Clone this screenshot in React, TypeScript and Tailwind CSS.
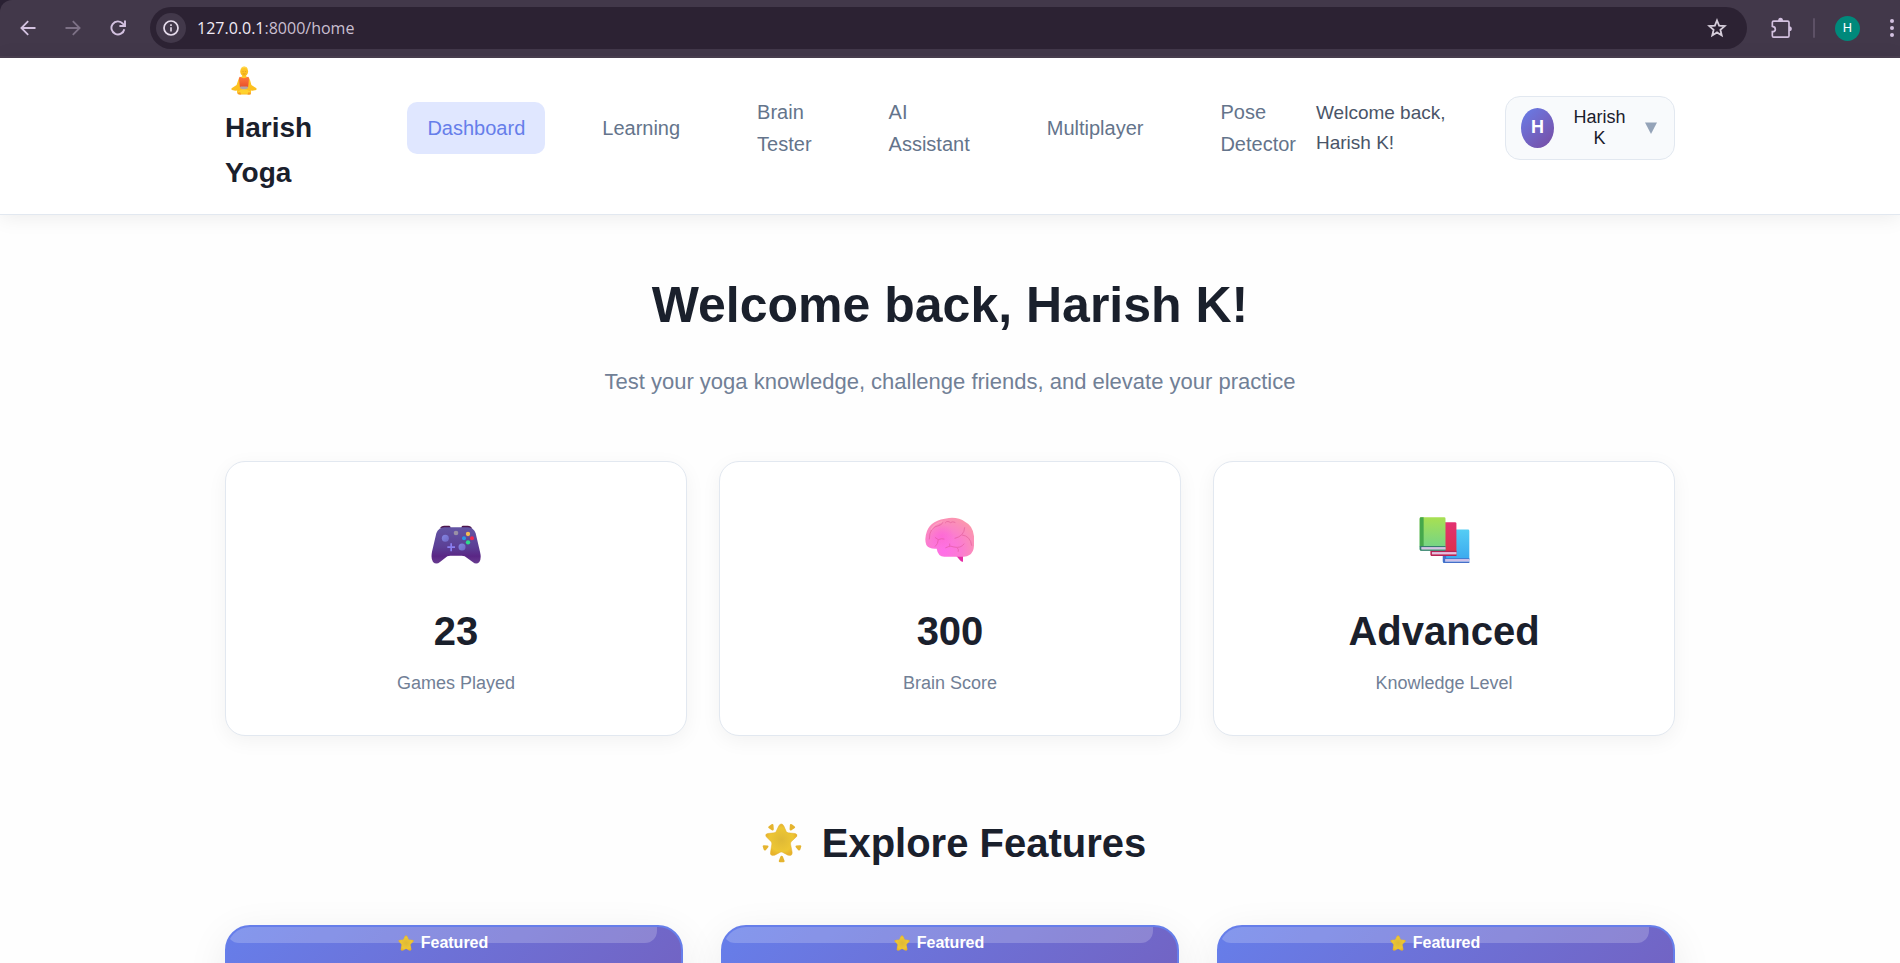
import type { ReactNode } from "react";

function ArrowIcon({ flipped = false }: { flipped?: boolean }) {
  return (
    <svg viewBox="0 0 16 16" className={flipped ? "size-4 -scale-x-100" : "size-4"} fill="none" stroke="currentColor" strokeWidth="1.8">
      <path d="M15.5 8H1.500M8.200 1.200 1.400 8l6.800 6.800" />
    </svg>
  );
}

function ReloadIcon() {
  return (
    <svg viewBox="0 0 16 16" className="size-4" fill="none" stroke="currentColor" strokeWidth="1.9">
      <path d="M14.300 9.200A6.500 6.500 0 1 1 12.800 3.600L14.600 5.400" />
      <path d="M15 .6v5.400H9.400" />
    </svg>
  );
}

function InfoIcon() {
  return (
    <svg viewBox="0 0 16 16" className="size-4" fill="none" stroke="currentColor">
      <circle cx="8" cy="8" r="7" strokeWidth="1.700" />
      <path d="M8 7.200v4.300M8 4.300v1.700" strokeWidth="1.600" />
    </svg>
  );
}

function StarOutlineIcon() {
  return (
    <svg viewBox="0 0 20 20" className="size-5" fill="none" stroke="currentColor" strokeWidth="1.8">
      <path d="m10 2.500 2.100 5.200 5.600.4-4.300 3.700 1.300 5.600L10 14.400l-4.700 3 1.300-5.600-4.300-3.700 5.600-.4Z" />
    </svg>
  );
}

function ExtensionIcon() {
  return (
    <svg viewBox="273 50 66 66" className="size-[22px]">
      <path
        d="M281 62.500H323Q327 62.500 327 66.500V106Q327 110.500 323 110.500H281Q277 110.500 277 106V94Q286 94 286 86.500T277 78V66.500Q277 62.500 281 62.500Z"
        fill="none"
        stroke="currentColor"
        strokeWidth="5"
      />
      <path d="M294 62a7.500 9.500 0 0 1 15 0ZM327 78a8.500 7.500 0 0 1 0 15Z" fill="currentColor" />
    </svg>
  );
}

function YogaEmoji() {
  return (
    <svg viewBox="34 36 79 90" className="h-[30px] w-[26px]" role="img" aria-label="Person in lotus position">
      <defs>
        <linearGradient id="skin" x1="0" y1="0" x2="0" y2="1">
          <stop offset="0" stopColor="#ffc928" />
          <stop offset="1" stopColor="#fbbc1c" />
        </linearGradient>
        <linearGradient id="shirt" x1="0" y1="0" x2="0" y2="1">
          <stop offset="0" stopColor="#ff7a3c" />
          <stop offset="1" stopColor="#e9502b" />
        </linearGradient>
      </defs>
      <path d="M68 59h12v8q10 2 12 12l4 14 14 9q4 3 0 6l-11 3-5-1q4 9-6 12H59q-9-3-6-12l-6 1-10-3q-4-3 0-6l14-9 5-15q2-9 12-11Z" fill="url(#skin)" />
      <path d="M52 114 73 104l22 10-3 6H56Z" fill="#ffd22e" />
      <path d="M55 121l-1-4 8-2 3 7ZM84 122l3-7 8 2-2 6Z" fill="#f79a24" />
      <path d="M61 68q12 9 25 0l3 4-3 27H61l-3-27Z" fill="url(#shirt)" />
      <path d="M63 98h21l2 4-7 4H68l-7-4Z" fill="#b3a3a6" />
      <ellipse cx="74" cy="52" rx="12" ry="14" fill="url(#skin)" />
      <path d="M64 44q2-7 10-7t11 7q-10-5-21 0Z" fill="#ffd64a" />
      <path d="M69 52h3M77 52h3M70 59q4 2 8 0" stroke="#cf8c2a" strokeWidth="2" fill="none" />
    </svg>
  );
}

function GamepadEmoji() {
  return (
    <svg viewBox="95 106 150 117" className="h-[39px] w-[50px]" role="img" aria-label="Game controller">
      <defs>
        <linearGradient id="pad" x1="0" y1="0" x2="0" y2="1">
          <stop offset="0" stopColor="#6355a4" />
          <stop offset=".55" stopColor="#5b3f95" />
          <stop offset=".8" stopColor="#5a2685" />
          <stop offset="1" stopColor="#683c90" />
        </linearGradient>
        <linearGradient id="stick" x1="0" y1="0" x2="1" y2="1">
          <stop offset="0" stopColor="#8486e2" />
          <stop offset="1" stopColor="#7068c6" />
        </linearGradient>
      </defs>
      <path d="M121 117q4-9 14-9h15q4 1 4 8H121ZM186 116q0-7 4-8h15q10 0 14 9Z" fill="#4c154d" />
      <path d="M135 113H206Q223 114 229 131L242 186Q247 207 240 217 231 226 220 217L196 200Q192 198 187 198H153Q148 198 144 200L122 217Q111 226 101 217 94 207 98 186L111 131Q117 114 135 113Z" fill="url(#pad)" />
      <circle cx="138" cy="146" r="10.500" fill="url(#stick)" />
      <circle cx="188" cy="172" r="10.500" fill="url(#stick)" />
      <path d="M153 161h5v9h9v5h-9v10h-5v-10h-9v-5h9Z" fill="#8a7ff0" />
      <circle cx="170" cy="130" r="7" fill="#9990a5" />
      <circle cx="206" cy="133" r="6.500" fill="#f5bd52" />
      <circle cx="194" cy="146" r="6" fill="#279ae8" />
      <circle cx="218" cy="146" r="6" fill="#f32850" />
      <circle cx="206" cy="158" r="6.500" fill="#2fdc8c" />
    </svg>
  );
}

function BrainEmoji() {
  return (
    <svg viewBox="78 82 150 135" className="h-[45px] w-[50px]" role="img" aria-label="Brain">
      <defs>
        <radialGradient id="brain" gradientUnits="userSpaceOnUse" cx="135" cy="185" r="115">
          <stop offset="0" stopColor="#ff6fe8" />
          <stop offset=".45" stopColor="#fb7bd2" />
          <stop offset="1" stopColor="#fb9aa9" />
        </radialGradient>
        <radialGradient id="glow" gradientUnits="userSpaceOnUse" cx="128" cy="140" r="36">
          <stop offset="0" stopColor="#ff5fd6" stopOpacity=".6" />
          <stop offset="1" stopColor="#ff5fd6" stopOpacity="0" />
        </radialGradient>
      </defs>
      <path d="M172 199h20v17q-6 1-9-4Z" fill="#e62da6" />
      <path d="M150 85Q178 82 199 97 222 108 225 140V168Q224 188 211 196 205 201 194 201H136Q117 201 113 177 91 179 82 166 75 148 84 124 96 91 150 85Z" fill="url(#brain)" />
      <circle cx="128" cy="140" r="36" fill="url(#glow)" />
      <g fill="none" stroke="#dc5290" strokeWidth="3" strokeLinecap="round" opacity=".5">
        <path d="M91 148Q90 112 121 107M121 107q8-1 10-8M139 99q3-6 11-3l4 3q7-5 14-1" />
        <path d="M168 146q28-7 29-32M190 136q24 3 28 31M109 144l9 6q10-5 17-2M118 150q-1 14-9 20" />
        <path d="M140 174q14-9 25-2 20 5 30-9M176 176q4 3 2 9M152 171v-8" />
      </g>
      <path d="M96 120q10-19 34-24" fill="none" stroke="#ffbcc7" strokeWidth="4" opacity=".45" />
    </svg>
  );
}

function BooksEmoji() {
  return (
    <svg viewBox="89 83 152 139" className="h-[46px] w-[51px]" role="img" aria-label="Books">
      <defs>
        <linearGradient id="green" x1="0" y1="0" x2="0" y2="1">
          <stop offset="0" stopColor="#a8e052" />
          <stop offset="1" stopColor="#6fd38c" />
        </linearGradient>
        <linearGradient id="red" x1="0" y1="0" x2="0" y2="1">
          <stop offset="0" stopColor="#e33172" />
          <stop offset="1" stopColor="#dd3145" />
        </linearGradient>
        <linearGradient id="blue" x1="0" y1="0" x2="0" y2="1">
          <stop offset="0" stopColor="#54cdf4" />
          <stop offset="1" stopColor="#39a5ee" />
        </linearGradient>
      </defs>
      <rect x="160" y="121" width="80" height="101" rx="4" fill="url(#blue)" />
      <path d="M160 201h10v7h70v4h-73v6h73v4h-76q-4 0-4-5Z" fill="#456fc9" />
      <rect x="167" y="210" width="73" height="8" fill="#cfc0e8" />
      <rect x="123" y="99" width="78" height="102" rx="4" fill="url(#red)" />
      <path d="M123 168h20v17h58v5h-73v6h73v5h-74q-4 0-4-5Z" fill="#b72356" />
      <rect x="127" y="189" width="74" height="7" fill="#e3c0df" />
      <rect x="90" y="84" width="78" height="101" rx="4" fill="url(#green)" />
      <path d="M94 84h8v88H90V88q0-4 4-4Z" fill="#46a84c" />
      <path d="M90 171h78v4H96v6h72v4H94q-4 0-4-5Z" fill="#367a70" />
      <rect x="95" y="174" width="73" height="7" fill="#d4c1e5" />
    </svg>
  );
}

function StarShape() {
  return (
    <path
      d="M126 72Q131 72 134 79L141 95Q143 98 147 99L168 101Q176 103 173 110L156 126Q154 129 154 133L159 158Q160 167 153 168L146 167 129 158Q126 157 123 158L106 167 98 168Q91 166 93 158L97 133Q97 129 95 126L80 111Q75 103 84 101L104 99Q109 98 110 95L118 78Q121 72 126 72Z"
      fill="url(#gold)"
      stroke="#e2ae2f"
      strokeWidth="1.500"
    />
  );
}

function GoldGradient() {
  return (
    <defs>
      <radialGradient id="gold">
        <stop offset="0" stopColor="#dfb936" />
        <stop offset=".75" stopColor="#edc634" />
        <stop offset="1" stopColor="#e8b32c" />
      </radialGradient>
    </defs>
  );
}

function GlowingStarEmoji() {
  return (
    <svg viewBox="67 70 122 120" className="size-10" role="img" aria-label="Glowing star">
      <GoldGradient />
      <StarShape />
      <path
        d="M87 80l9-7q5-3 6 2l1 13q-1 5-6 3l-9-6q-4-2-1-5ZM167 80l-9-7q-5-3-6 2l-1 13q1 5 6 3l9-6q4-2 1-5ZM69 140q0-3 4-3l11 1q5 1 2 5l-7 8q-4 4-7-1ZM187 140q0-3-4-3l-11 1q-5 1-2 5l7 8q4 4 7-1ZM127 169q3 0 4 3l5 13q0 4-4 4h-10q-4 0-4-4l5-13q1-3 4-3Z"
        fill="#e5b42f"
      />
    </svg>
  );
}

function StarEmoji() {
  return (
    <svg viewBox="75 70 101 100" className="size-4" role="img" aria-label="Star">
      <GoldGradient />
      <StarShape />
    </svg>
  );
}

const navItems = ["Dashboard", "Learning", "Brain Tester", "AI Assistant", "Multiplayer", "Pose Detector"];

const stats: { icon: ReactNode; value: string; label: string; align: string }[] = [
  { icon: <GamepadEmoji />, value: "23", label: "Games Played", align: "items-end pb-1.5" },
  { icon: <BrainEmoji />, value: "300", label: "Brain Score", align: "items-start pt-[5px]" },
  { icon: <BooksEmoji />, value: "Advanced", label: "Knowledge Level", align: "items-start pt-[5px]" },
];

function BrowserBar() {
  return (
    <div className="bg-[#2a2133]">
      <div className="flex h-[58px] items-center rounded-tl-xl border-b-2 border-[#4a3f50] bg-[#42384a] pr-1.5 pl-5 text-[#d3c1e0]">
        <div className="flex gap-[29px]">
          <button type="button" aria-label="Back"><ArrowIcon /></button>
          <button type="button" aria-label="Forward" className="text-[#7d7186]"><ArrowIcon flipped /></button>
          <button type="button" aria-label="Reload"><ReloadIcon /></button>
        </div>
        <div className="ml-6 flex h-[42px] flex-1 items-center rounded-full bg-[#2c2233] pr-5 pl-1.5">
          <button type="button" aria-label="Site information" className="flex size-[30px] items-center justify-center rounded-full bg-[#42384a] text-[#e6dcec]">
            <InfoIcon />
          </button>
          <div className="ml-[11px] flex-1 font-['Open_Sans',sans-serif] text-base text-[#c9bfd0]">
            <span className="text-[#f1eaf5]">127.0.0.1</span>:8000/home
          </div>
          <button type="button" aria-label="Bookmark this page" className="text-[#d6cedb]"><StarOutlineIcon /></button>
        </div>
        <button type="button" aria-label="Extensions" className="ml-6"><ExtensionIcon /></button>
        <div className="ml-5 h-5 w-0.5 rounded bg-[#5d5166]" />
        <button type="button" className="ml-5 flex size-[25px] items-center justify-center rounded-full bg-[#00897b] font-[Roboto,sans-serif] text-[13px] text-white">H</button>
        <button type="button" aria-label="Menu" className="ml-[30px] flex flex-col gap-[3px]">
          <span className="size-1 rounded-full bg-current" />
          <span className="size-1 rounded-full bg-current" />
          <span className="size-1 rounded-full bg-current" />
        </button>
      </div>
    </div>
  );
}

function SiteHeader() {
  return (
    <header className="border-b border-[#e2e8f0] bg-white pt-0.5 pb-[19px] shadow-[0_2px_20px_rgba(0,0,0,0.08)]">
      <div className="mx-auto flex max-w-[1500px] items-center justify-between px-[25px]">
        <a href="#home" className="w-min text-[28px] leading-[45px] font-bold text-[#1a202c]">
          <span className="flex h-[45px] items-center pb-1 pl-1.5"><YogaEmoji /></span>
          Harish Yoga
        </a>
        <div className="flex items-center">
          <nav className="flex items-center gap-[37px]">
            {navItems.map((item, i) => (
              <a
                key={item}
                href="#nav"
                className={
                  i === 0
                    ? "rounded-[10px] bg-[#e0e7ff] px-5 py-2.5 text-xl leading-8 text-[#667eea]"
                    : "box-content w-min rounded-[10px] px-5 py-2.5 text-xl leading-8 text-[#64748b]"
                }
              >
                {item}
              </a>
            ))}
          </nav>
          <p className="mr-[19px] w-[170px] pr-5 text-[19px] leading-[30px] text-[#4a5568]">Welcome back, Harish K!</p>
          <button type="button" className="flex w-[170px] items-center justify-between rounded-[15px] border border-[#e2e8f0] bg-[#f8fafc] px-[15px] py-2.5 text-lg leading-[21px] text-[#1a202c]">
            <span className="flex h-10 w-[33px] items-center justify-center rounded-[50%] bg-linear-135 from-[#667eea] to-[#764ba2] font-bold text-white">H</span>
            <span className="w-min">Harish K</span>
            <svg viewBox="0 0 12 12" className="mr-0.5 size-3" fill="#94a3b8" aria-hidden="true"><path d="M0 .5h12L6 12Z" /></svg>
          </button>
        </div>
      </div>
    </header>
  );
}

export default function App() {
  return (
    <div className="h-screen overflow-hidden bg-[#fefefe] font-['Liberation_Sans',Arial,sans-serif] text-[#1a202c]">
      <BrowserBar />
      <SiteHeader />
      <main className="mx-auto max-w-[1500px] px-[25px] pt-[50px] text-center">
        <h1 className="text-[50px] leading-[80px] font-bold">Welcome back, Harish K!</h1>
        <p className="mt-[19px] text-[22px] leading-[35px] text-[#718096]">
          Test your yoga knowledge, challenge friends, and elevate your practice
        </p>

        <section className="mt-[62px] grid grid-cols-3 gap-8">
          {stats.map((stat) => (
            <article key={stat.label} className="flex flex-col items-center rounded-[20px] border border-[#e2e8f0] bg-white pt-[50px] pb-[37px] shadow-[0_5px_20px_rgba(0,0,0,0.05)]">
              <div className={`flex h-[58px] ${stat.align}`}>{stat.icon}</div>
              <p className="mt-[29px] text-[40px] leading-[64px] font-bold">{stat.value}</p>
              <p className="mt-1.5 text-lg leading-[29px] text-[#718096]">{stat.label}</p>
            </article>
          ))}
        </section>

        <h2 className="mt-[75px] flex items-center justify-center gap-5 pl-2 text-[40px] leading-[64px] font-bold">
          <GlowingStarEmoji />
          Explore Features
        </h2>

        <section className="mt-[50px] grid grid-cols-3 gap-[38px]">
          {[0, 1, 2].map((card) => (
            <article key={card} className="h-[500px] overflow-hidden rounded-[25px] border-2 border-[#667eea] bg-linear-135 from-[#667eea] to-[#764ba2] shadow-[0_10px_40px_rgba(0,0,0,0.08)]">
              <div className="mr-6 h-4 rounded-b-[12px] bg-white/20 pt-1.5 pl-0.5">
                <p className="flex items-center justify-center gap-[7px] text-base leading-5 font-bold text-white">
                  <StarEmoji />
                  Featured
                </p>
              </div>
            </article>
          ))}
        </section>
      </main>
    </div>
  );
}
